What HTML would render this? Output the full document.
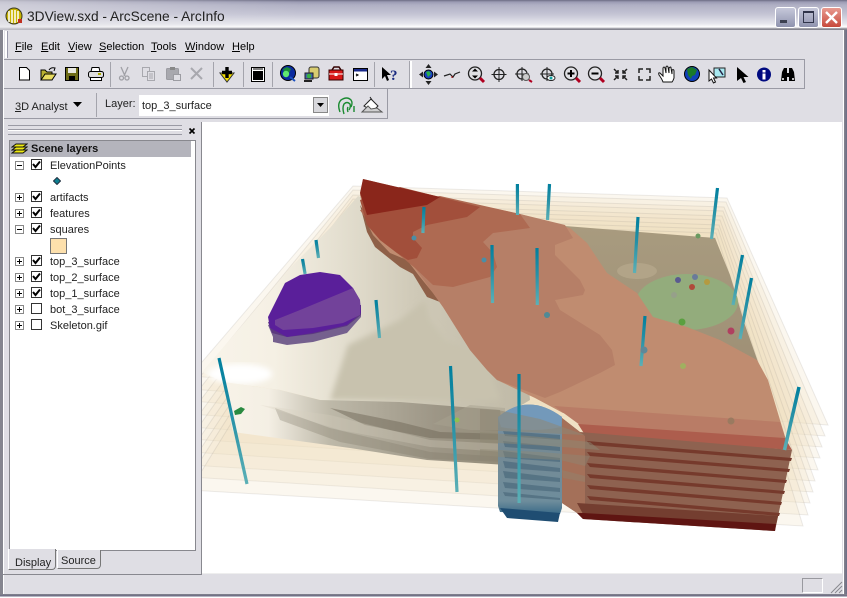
<!DOCTYPE html>
<html><head><meta charset="utf-8">
<style>
html,body{margin:0;padding:0;background:#dfdee4;}
body{width:847px;height:598px;position:relative;overflow:hidden;font:11px "Liberation Sans",sans-serif;color:#000;}
.a{position:absolute;}
.t{position:absolute;white-space:nowrap;line-height:14px;}
u{text-decoration:underline;}
.chk{position:absolute;left:31px;width:9px;height:9px;border:1px solid #333;background:#fff;}
.exp{position:absolute;left:15px;width:7px;height:7px;border:1px solid #888;background:#fff;}
</style></head><body>
<!-- title bar -->
<div class="a" style="left:0;top:0;width:847px;height:30px;background:linear-gradient(#6c6c84 0,#9c9cb4 2px,#b0b0c4 5px,#c4c4d4 14px,#e8e8ee 24px,#fff 27px,#85858f 29px,#85858f 30px);"></div>
<div class="a" style="left:0;top:0;width:300px;height:30px;background:linear-gradient(90deg,rgba(223,222,228,.65),rgba(223,222,228,0));"></div>
<svg class="a" style="left:5px;top:7px" width="18" height="18" viewBox="0 0 18 18"><circle cx="9" cy="9" r="8" fill="#c8b400" stroke="#3a3a20"/><path d="M4 4v11M7 3v13M10 3v13M13 4v11" stroke="#fff" stroke-width="1.5"/><rect x="13" y="12" width="4" height="4" fill="#c03020"/></svg>
<div class="t" style="left:27px;top:10px;font-size:13.75px;color:#222;">3DView.sxd - ArcScene - ArcInfo</div>
<!-- window buttons -->
<div class="a" style="left:775px;top:7px;width:19px;height:19px;border-radius:3px;border:1px solid #fff;background:linear-gradient(#c6c8da,#8f93ae);box-sizing:content-box"><div class="a" style="left:4px;top:12px;width:7px;height:3px;background:#3c4050;"></div></div>
<div class="a" style="left:798px;top:7px;width:19px;height:19px;border-radius:3px;border:1px solid #fff;background:linear-gradient(#c6c8da,#8f93ae);"><div class="a" style="left:4px;top:3px;width:9px;height:9px;border:1px solid #30344a;border-top-width:2px;"></div></div>
<div class="a" style="left:821px;top:7px;width:19px;height:19px;border-radius:3px;border:1px solid #fff;background:linear-gradient(#e89a90,#c74a3c);"><svg class="a" style="left:2px;top:2px" width="15" height="15"><path d="M2 2L13 13M13 2L2 13" stroke="#fff" stroke-width="2.4"/></svg></div>
<!-- frame -->
<div class="a" style="left:0;top:30px;width:3px;height:568px;background:#85858f;border-right:1px solid #fff;box-sizing:content-box"></div>
<div class="a" style="left:843px;top:30px;width:4px;height:568px;background:linear-gradient(90deg,#fff 1px,#85858f 1px,#6c6c84);"></div>
<div class="a" style="left:0;top:594px;width:847px;height:4px;background:linear-gradient(#85858f,#6c6c84 2px,#fff 3px);"></div>
<!-- menu -->
<div class="a" style="left:5px;top:31px;width:2px;height:27px;background:#fff;border-right:1px solid #99a;"></div>
<div class="t" style="left:15px;top:40px;"><u>F</u>ile</div>
<div class="t" style="left:41px;top:40px;"><u>E</u>dit</div>
<div class="t" style="left:68px;top:40px;"><u>V</u>iew</div>
<div class="t" style="left:99px;top:40px;"><u>S</u>election</div>
<div class="t" style="left:151px;top:40px;"><u>T</u>ools</div>
<div class="t" style="left:185px;top:40px;"><u>W</u>indow</div>
<div class="t" style="left:232px;top:40px;"><u>H</u>elp</div>
<!-- toolbar lines -->
<div class="a" style="left:4px;top:59px;width:801px;height:30px;border:1px solid #9a9aa4;border-left:0;box-sizing:border-box;"></div>
<div class="a" style="left:4px;top:89px;width:384px;height:30px;border-right:1px solid #9a9aa4;border-bottom:1px solid #9a9aa4;box-sizing:border-box;"></div>
<div class="a" style="left:409px;top:61px;width:1px;height:27px;background:#a4a4ac;border-right:2px solid #fff;"></div>
<div class="a" style="left:110px;top:62px;width:1px;height:25px;background:#a4a4ac;"></div>
<div class="a" style="left:213px;top:62px;width:1px;height:25px;background:#a4a4ac;"></div>
<div class="a" style="left:243px;top:62px;width:1px;height:25px;background:#a4a4ac;"></div>
<div class="a" style="left:272px;top:62px;width:1px;height:25px;background:#a4a4ac;"></div>
<div class="a" style="left:374px;top:62px;width:1px;height:25px;background:#a4a4ac;"></div>
<div class="a" style="left:96px;top:93px;width:1px;height:24px;background:#a4a4ac;"></div>
<!-- toolbar icons -->
<svg class="a" style="left:0;top:55px" width="847" height="40" viewBox="0 55 847 40">
<path d="M19.500 67.500h7l3 3v9.500h-10z" fill="#fff" stroke="#000"/>
<path d="M41 80V70h4l2 2h5v8z" fill="#b8b030" stroke="#000"/><path d="M41 80l4-6h11l-4 6z" fill="#e8dc60" stroke="#000"/><path d="M49 70q2-3 6-2l-1 3" fill="none" stroke="#000"/>
<rect x="65.500" y="67.500" width="13" height="13" fill="#6e6c16" stroke="#000"/><rect x="68" y="68" width="8" height="5" fill="#e8e8e0"/><rect x="69" y="76" width="6" height="4" fill="#000"/>
<path d="M92 67.500h7l1 4H91z" fill="#fff" stroke="#000"/><rect x="88.500" y="71.500" width="15" height="6" rx="2" fill="#ddd" stroke="#000"/><rect x="90.500" y="77.500" width="11" height="3" fill="#fff" stroke="#000"/><rect x="98" y="73" width="3" height="2" fill="#aa0"/>
<g stroke="#a0a0a6" fill="none" stroke-width="1.300"><path d="M121 67l4 9M128 67l-4 9"/><circle cx="121.500" cy="78" r="2"/><circle cx="127" cy="78" r="2"/></g>
<g stroke="#a8a8ae" fill="#dfdee4"><rect x="142.500" y="67.500" width="7" height="9"/><rect x="147.500" y="71.500" width="7" height="9"/><path d="M149 74h4M149 76h4M149 78h4"/></g>
<rect x="166.500" y="68.500" width="12" height="11" rx="1" fill="#a8a8ae" stroke="#9c9ca2"/><rect x="170" y="67" width="5" height="3" fill="#888"/><rect x="173.500" y="74.500" width="7" height="6" fill="#dfdee4" stroke="#9c9ca2"/>
<path d="M191 68l11 11M202 68l-11 11" stroke="#a8a8ae" stroke-width="2"/>
<path d="M220 73h14l-7 9z" fill="#f5e000" stroke="#333"/><path d="M227 67v11M222 72.500h10" stroke="#000" stroke-width="3.400"/>
<rect x="251.500" y="67.500" width="13" height="14" fill="#fff" stroke="#000"/><rect x="253" y="71" width="10" height="9" fill="#000"/><path d="M253 69h10" stroke="#000"/>
<circle cx="288" cy="73" r="7.500" fill="#0a2aa0" stroke="#000"/><path d="M283 69l4-2 4 2-2 4-4 3z" fill="#1a8a3a"/><circle cx="286" cy="74" r="3.200" fill="#60e870"/><path d="M290 77l5 4" stroke="#1a50c0" stroke-width="2"/>
<rect x="309" y="67" width="10" height="11" rx="2" fill="#d8cc70" stroke="#333"/><rect x="305" y="73" width="8" height="6" fill="#4060b0" stroke="#222"/><circle cx="309" cy="76" r="2.300" fill="#38b040"/><path d="M304 81h8" stroke="#222" stroke-width="2"/>
<path d="M329 70h14v10h-14z" fill="#d81818" stroke="#300"/><path d="M332 70l2-3h5l2 3" fill="none" stroke="#300" stroke-width="1.500"/><path d="M329 74h14" stroke="#fff"/><rect x="334.500" y="73" width="3" height="3" fill="#fff"/>
<rect x="353.500" y="68.500" width="14" height="12" fill="#fff" stroke="#000"/><rect x="354" y="69" width="13" height="2.500" fill="#1a2a8a"/><path d="M356 74l2 1-2 1" stroke="#000" fill="none"/>
<path d="M382 67v12l3-3 2 5 2-1-2-5h4z" fill="#000"/>
<text x="390" y="80" font-family="Liberation Serif,serif" font-weight="bold" font-size="15" fill="#1a2a80">?</text>
<circle cx="428.500" cy="74.500" r="4.500" fill="#1840c0" stroke="#000"/><path d="M426 72l3-1 2 3-3 3z" fill="#28b048"/><path d="M428.500 64l-3 4h6zM428.500 85l-3-4h6zM419 74.500l4-3v6zM438 74.500l-4-3v6z" fill="#222"/>
<path d="M444 76l6-2 3 3 2-3 5-2" fill="none" stroke="#222" stroke-width="1.200"/><path d="M452 76v2" stroke="#a00"/>
<circle cx="475" cy="73.500" r="6.500" fill="#e0e0e4" stroke="#222" stroke-width="1.300"/><path d="M475 68.500l-3 3h6zM475 78.500l-3-3h6z" fill="#000"/><path d="M480 78l4 4" stroke="#b00020" stroke-width="3"/>
<circle cx="499" cy="74.500" r="5" fill="none" stroke="#222" stroke-width="1.300"/><path d="M499 67v15M491.500 74.500h15" stroke="#222"/>
<circle cx="522" cy="74" r="5" fill="none" stroke="#222" stroke-width="1.300"/><path d="M522 67v14M515 74h14" stroke="#222"/><circle cx="526" cy="77" r="3.500" fill="#ccc" stroke="#555"/><path d="M529 80l3 2" stroke="#b00020" stroke-width="2"/>
<circle cx="547" cy="74" r="5" fill="none" stroke="#222" stroke-width="1.300"/><path d="M547 67v14M540 74h14" stroke="#222"/><ellipse cx="551" cy="78" rx="4" ry="2.500" fill="#fff" stroke="#222"/><circle cx="551" cy="78" r="1.500" fill="#10a0a0"/>
<circle cx="571" cy="73.500" r="6.500" fill="#e0e0e4" stroke="#222" stroke-width="1.300"/><path d="M571 70v7M567.500 73.500h7" stroke="#000" stroke-width="2"/><path d="M576 78l4 4" stroke="#b00020" stroke-width="3"/>
<circle cx="595" cy="73.500" r="6.500" fill="#e0e0e4" stroke="#222" stroke-width="1.300"/><path d="M591.500 73.500h7" stroke="#000" stroke-width="2"/><path d="M600 78l4 4" stroke="#b00020" stroke-width="3"/>
<path d="M614 69l4 4M618 70v3h-3M627 69l-4 4M623 70v3h3M614 80l4-4M618 79v-3h-3M627 80l-4-4M623 79v-3h3" fill="none" stroke="#222" stroke-width="1.500"/>
<path d="M639 73v-4h4M650 73v-4h-4M639 76v4h4M650 76v4h-4" fill="none" stroke="#222" stroke-width="1.500"/>
<path d="M663 82q-1-3-4-7-1-3 1-2l3 3v-8q1-2 2 0l1 5v-6q1-2 2 0l1 6v-5q2-2 2 0l1 6v-4q2-1 2 1v7q-1 3-2 4z" fill="#fff" stroke="#111"/>
<circle cx="692" cy="74" r="7.500" fill="#1040b8" stroke="#000"/><path d="M687 69l5-2 5 3-2 5-3 1-1 3-3-4z" fill="#1a7a2a"/>
<path d="M714 68h11v9h-11z" fill="#a8e8f0" stroke="#222"/><path d="M719 69l4 6" stroke="#224" stroke-width="1.500"/><path d="M709 70v11l2.500-2 2 4 2-1-2-4h3z" fill="#fff" stroke="#111"/>
<path d="M737 67v14l4-3 2.500 5 2.500-1-2.500-5h5z" fill="#000"/>
<circle cx="764" cy="74.500" r="7" fill="#000a80"/><rect x="762.500" y="70" width="3" height="2.500" fill="#fff"/><rect x="762.500" y="73.500" width="3" height="6" fill="#fff"/>
<path d="M781 81l1-9 2-4h3v13zM789 81V68h3l2 4 1 9z" fill="#000"/><rect x="785" y="73" width="6" height="4" fill="#000"/><circle cx="783" cy="79" r="1" fill="#fff"/><circle cx="793" cy="79" r="1" fill="#fff"/>
</svg>
<!-- row 3 -->
<div class="t" style="left:15px;top:100px;color:#222"><u>3</u>D Analyst</div>
<svg class="a" style="left:73px;top:102px" width="10" height="6"><path d="M0 0h9L4.500 5z" fill="#000"/></svg>
<div class="t" style="left:105px;top:97px;color:#222">Layer:</div>
<div class="a" style="left:139px;top:95px;width:190px;height:21px;background:#fff;"></div>
<div class="t" style="left:142px;top:99px;color:#222">top_3_surface</div>
<div class="a" style="left:313px;top:97px;width:15px;height:16px;background:#d8d8dc;border:1px solid #888;box-sizing:border-box;"><svg class="a" style="left:3px;top:5px" width="9" height="5"><path d="M0 0h7L3.500 4z" fill="#000"/></svg></div>
<svg class="a" style="left:336px;top:95px" width="50" height="22" viewBox="336 95 50 22">
<path d="M340 112q-3-8 1-12 6-4 10 0 2 3 0 7M344 114q-2-6 0-10 3-3 6 0 1 3-1 6M348 112q-1-3 0-5M354 106v6" fill="none" stroke="#1a8a30" stroke-width="1.400"/>
<path d="M364 106l7-7 7 7-5 5z" fill="#fff" stroke="#222"/><path d="M362 112l6-6 3 3 6-1 5 4z" fill="#cfcfd0" stroke="#555"/><path d="M370 97l2 3" stroke="#222"/>
</svg>
<!-- TOC panel -->
<div class="a" style="left:8px;top:125px;width:174px;height:3px;border-top:1px solid #9a9aa4;border-bottom:1px solid #9a9aa4;"></div>
<div class="a" style="left:8px;top:130px;width:174px;height:3px;border-top:1px solid #fff;border-bottom:1px solid #9a9aa4;"></div>
<svg class="a" style="left:187px;top:126px" width="11" height="10"><path d="M2.500 2.500l5 5M7.500 2.500l-5 5" stroke="#000" stroke-width="1.600"/></svg>
<div class="a" style="left:201px;top:122px;width:1px;height:453px;background:#88888f;"></div>
<div class="a" style="left:9px;top:140px;width:187px;height:411px;background:#fff;border:1px solid #88888e;box-sizing:border-box;"></div>
<div class="a" style="left:10px;top:141px;width:181px;height:16px;background:#b4b4bc;"></div>
<svg class="a" style="left:11px;top:141px" width="17" height="16"><path d="M1 12l4-3h11l-4 3zM1 9l4-3h11l-4 3zM1 6l4-3h11l-4 3z" fill="#f0ec10" stroke="#111"/></svg>
<div class="t" style="left:31px;top:142px;font-weight:bold;color:#111;">Scene layers</div>
<div class="exp" style="top:161px;"><div class="a" style="left:1px;top:3px;width:5px;height:1px;background:#000"></div></div>
<div class="chk" style="top:159px;"><svg class="a" style="left:0;top:0" width="9" height="9"><path d="M1 4l2.500 3L8 1.500" fill="none" stroke="#000" stroke-width="2"/></svg></div>
<div class="t" style="left:50px;top:159px;color:#222">ElevationPoints</div>
<svg class="a" style="left:53px;top:177px" width="8" height="8"><path d="M4 .5L7.500 4 4 7.500.5 4z" fill="#0d7f90" stroke="#234"/></svg>
<div class="exp" style="top:193px;"><div class="a" style="left:1px;top:3px;width:5px;height:1px;background:#000"></div><div class="a" style="left:3px;top:1px;width:1px;height:5px;background:#000"></div></div>
<div class="chk" style="top:191px;"><svg class="a" style="left:0;top:0" width="9" height="9"><path d="M1 4l2.500 3L8 1.500" fill="none" stroke="#000" stroke-width="2"/></svg></div>
<div class="t" style="left:50px;top:191px;color:#222">artifacts</div>
<div class="exp" style="top:209px;"><div class="a" style="left:1px;top:3px;width:5px;height:1px;background:#000"></div><div class="a" style="left:3px;top:1px;width:1px;height:5px;background:#000"></div></div>
<div class="chk" style="top:207px;"><svg class="a" style="left:0;top:0" width="9" height="9"><path d="M1 4l2.500 3L8 1.500" fill="none" stroke="#000" stroke-width="2"/></svg></div>
<div class="t" style="left:50px;top:207px;color:#222">features</div>
<div class="exp" style="top:225px;"><div class="a" style="left:1px;top:3px;width:5px;height:1px;background:#000"></div></div>
<div class="chk" style="top:223px;"><svg class="a" style="left:0;top:0" width="9" height="9"><path d="M1 4l2.500 3L8 1.500" fill="none" stroke="#000" stroke-width="2"/></svg></div>
<div class="t" style="left:50px;top:223px;color:#222">squares</div>
<div class="a" style="left:50px;top:238px;width:15px;height:14px;background:#fde0ac;border:1px solid #777;"></div>
<div class="exp" style="top:257px;"><div class="a" style="left:1px;top:3px;width:5px;height:1px;background:#000"></div><div class="a" style="left:3px;top:1px;width:1px;height:5px;background:#000"></div></div>
<div class="chk" style="top:255px;"><svg class="a" style="left:0;top:0" width="9" height="9"><path d="M1 4l2.500 3L8 1.500" fill="none" stroke="#000" stroke-width="2"/></svg></div>
<div class="t" style="left:50px;top:255px;color:#222">top_3_surface</div>
<div class="exp" style="top:273px;"><div class="a" style="left:1px;top:3px;width:5px;height:1px;background:#000"></div><div class="a" style="left:3px;top:1px;width:1px;height:5px;background:#000"></div></div>
<div class="chk" style="top:271px;"><svg class="a" style="left:0;top:0" width="9" height="9"><path d="M1 4l2.500 3L8 1.500" fill="none" stroke="#000" stroke-width="2"/></svg></div>
<div class="t" style="left:50px;top:271px;color:#222">top_2_surface</div>
<div class="exp" style="top:289px;"><div class="a" style="left:1px;top:3px;width:5px;height:1px;background:#000"></div><div class="a" style="left:3px;top:1px;width:1px;height:5px;background:#000"></div></div>
<div class="chk" style="top:287px;"><svg class="a" style="left:0;top:0" width="9" height="9"><path d="M1 4l2.500 3L8 1.500" fill="none" stroke="#000" stroke-width="2"/></svg></div>
<div class="t" style="left:50px;top:287px;color:#222">top_1_surface</div>
<div class="exp" style="top:305px;"><div class="a" style="left:1px;top:3px;width:5px;height:1px;background:#000"></div><div class="a" style="left:3px;top:1px;width:1px;height:5px;background:#000"></div></div>
<div class="chk" style="top:303px;"></div>
<div class="t" style="left:50px;top:303px;color:#222">bot_3_surface</div>
<div class="exp" style="top:321px;"><div class="a" style="left:1px;top:3px;width:5px;height:1px;background:#000"></div><div class="a" style="left:3px;top:1px;width:1px;height:5px;background:#000"></div></div>
<div class="chk" style="top:319px;"></div>
<div class="t" style="left:50px;top:319px;color:#222">Skeleton.gif</div>
<!-- tabs -->
<div class="a" style="left:8px;top:549px;width:48px;height:21px;background:#dfdee4;border-left:1px solid #fff;border-bottom:1px solid #777;border-right:1px solid #777;box-sizing:border-box;border-radius:0 0 4px 0;"></div>
<div class="t" style="left:15px;top:556px;color:#222">Display</div>
<div class="a" style="left:57px;top:550px;width:44px;height:19px;background:#dfdee4;border:1px solid #777;border-top:0;border-left-color:#fff;box-sizing:border-box;border-radius:0 0 4px 0;"></div>
<div class="t" style="left:61px;top:554px;color:#222">Source</div>
<div class="a" style="left:3px;top:574px;width:198px;height:1px;background:#88888f;"></div>
<!-- status -->
<div class="a" style="left:802px;top:578px;width:21px;height:15px;border:1px solid;border-color:#99999f #fff #fff #99999f;box-sizing:border-box;"></div>
<svg class="a" style="left:830px;top:580px" width="13" height="14"><path d="M12 2L1 13M12 6L5 13M12 10L9 13" stroke="#88888f"/></svg>
<!-- scene -->
<svg class="a" style="left:202px;top:122px" width="640" height="452" viewBox="202 122 640 452">
<defs>
<linearGradient id="g1" x1="0" x2="1" y1="0" y2="0"><stop offset="0" stop-color="#f8f4ea"/><stop offset=".22" stop-color="#f5f0e4"/><stop offset=".42" stop-color="#e4dfd0"/><stop offset=".65" stop-color="#cfc9b7"/><stop offset="1" stop-color="#bfb9a6"/></linearGradient>
<linearGradient id="g2" x1="0" x2="1" y1="0" y2="0"><stop offset="0" stop-color="#f8f3e8"/><stop offset=".16" stop-color="#f4efe4"/><stop offset=".38" stop-color="#bdb8a8"/><stop offset=".75" stop-color="#9d9686"/><stop offset="1" stop-color="#928b78"/></linearGradient>
<linearGradient id="ol" x1="0" x2="0" y1="0" y2="1"><stop offset="0" stop-color="#a89b7f"/><stop offset="1" stop-color="#9f9076"/></linearGradient>
<linearGradient id="p" x1="0" x2="0" y1="0" y2="1"><stop offset="0" stop-color="#007f9e"/><stop offset=".45" stop-color="#2590a6"/><stop offset="1" stop-color="#5cb0b6"/></linearGradient>
<linearGradient id="cy" x1="0" x2="0" y1="0" y2="1"><stop offset="0" stop-color="#7496b2"/><stop offset=".4" stop-color="#758a94"/><stop offset=".88" stop-color="#6e8d9c"/><stop offset="1" stop-color="#3a6a88"/></linearGradient>
<filter id="b1" x="-10%" y="-10%" width="120%" height="120%"><feGaussianBlur stdDeviation="3"/></filter>
</defs>
<rect x="202" y="122" width="640" height="452" fill="#fff"/>
<!-- stacked planes -->
<g fill="#eee0c0" fill-opacity=".25" stroke="#8e8a80" stroke-opacity=".16" stroke-width="1">
<polygon points="353,186 727,198 828,425 190,376"/>
<polygon points="353,190 726,202 825,436 190,389"/>
<polygon points="353,195 724,207 822,447 190,401"/>
<polygon points="353,199 723,211 820,458 190,414"/>
<polygon points="353,204 722,216 818,470 190,427"/>
<polygon points="353,208 720,220 815,481 190,439"/>
<polygon points="353,212 719,225 813,492 190,452"/>
<polygon points="353,217 718,229 810,503 190,465"/>
<polygon points="353,221 716,233 808,515 190,477"/>
<polygon points="353,226 715,238 803,526 190,490"/>
</g>
<!-- ground -->
<polygon points="358,196 330,228 290,268 245,322 202,372 223,382 280,390 320,400 400,405 505,415 530,400 520,300 500,250 420,220" fill="url(#g1)"/>
<path d="M330 400l18-55 52-25 25-20 5 20 15 20 25 10 20 20 10 30z" fill="#c8c2ae" filter="url(#b1)"/>
<ellipse cx="240" cy="374" rx="32" ry="10" fill="#fff" filter="url(#b1)"/>
<!-- front layered ground slabs -->
<polygon points="223,382 280,390 320,400 400,402 500,410 507,465 427,460 350,448 233,432" fill="url(#g2)"/>
<polygon points="330,408 400,422 440,432 505,434 505,440 430,438 365,425" fill="#6f6858" fill-opacity=".5"/>
<polygon points="275,408 330,428 430,452 505,457 505,462 430,459 340,442 280,420" fill="#7d7666" fill-opacity=".3"/>
<polygon points="260,405 330,415 430,440 505,444 505,452 430,447 340,430" fill="#d6d0c0" fill-opacity=".3"/>
<polygon points="433,424 470,405 505,408 505,430 470,430" fill="#a8a18f" opacity=".5"/>
<!-- olive -->
<polygon points="565,226 715,238 730,275 745,325 758,362 700,345 640,318 610,280" fill="url(#ol)"/>
<ellipse cx="637" cy="271" rx="20" ry="8" fill="#b2a488"/>
<ellipse cx="687" cy="302" rx="51" ry="28" fill="#93ac7c"/>
<!-- salmon under edge -->
<polygon points="360,205 367,232 375,247 400,267 413,274 427,297 440,302 432,280 410,260 380,235" fill="#8f6048"/>
<!-- salmon main -->
<polygon points="363,179 440,197 520,214 570,228 587,243 607,273 637,293 653,317 687,327 720,340 757,360 768,380 786,440 563,413 535,398 497,380 487,370 470,350 443,307 433,293 420,277 407,260 390,253 373,235 367,223 360,195" fill="#c08c70"/>
<polygon points="520,214 565,225 573,238 555,245 555,255 580,280 585,290 583,295 555,300 560,310 600,335 612,350 615,365 600,373 560,392 545,398 497,380 487,370 470,350 443,307 433,293 415,268" fill="#b67f67"/>
<polygon points="440,196 520,214 530,228 493,233 483,242 493,253 497,267 490,277 453,287 433,285 415,268 397,253 380,240 360,210" fill="#ae6a52"/>
<polygon points="400,187 480,207 467,217 427,225 413,232 413,238 422,248 417,258 408,260 397,253 380,240 367,225 360,200" fill="#a24f3b"/>
<polygon points="363,179 440,197 427,205 367,215 360,193" fill="#8a261b"/>
<!-- salmon slab -->
<polygon points="554,406 780,422 786,440 580,425" fill="#b97c66"/>
<polygon points="578,424 785,438 792,450 585,435" fill="#ad5d4d"/>
<polygon points="562,418 580,432 792,450 775,531 583,519 577,513 562,503" fill="#8e6250"/>
<polygon points="562,418 585,436 585,518 562,503" fill="#a47059"/>
<g fill="#763a2c">
<polygon points="587,441 792,458 791,461 590,445"/>
<polygon points="587,452 790,469 789,472 590,456"/>
<polygon points="587,463 787,480 786,483 590,467"/>
<polygon points="587,474 785,491 784,494 590,478"/>
<polygon points="587,485 782,502 781,505 590,489"/>
<polygon points="587,496 780,513 779,516 590,500"/>
</g>
<polygon points="577,503 778,516 776,525 583,514" fill="#743e30"/>
<polygon points="577,513 583,519 775,531 776,524 583,513" fill="#5f1512"/>
<!-- cylinder -->
<path d="M498 417q30-25 64 0l0 91-2 6-60-2-2-6z" fill="url(#cy)"/>
<path d="M498 417q30-25 64 0l-1 10q-28 6-60 0z" fill="#7399ba"/>
<g fill="#4b6a7c" fill-opacity=".7"><polygon points="503,431 560,435 560,440 505,436"/><polygon points="503,441 560,447 560,451 505,447"/><polygon points="503,451 560,458 560,462 505,458"/><polygon points="503,461 560,468 560,472 505,468"/><polygon points="503,471 560,478 560,482 505,478"/><polygon points="503,482 560,488 560,492 505,488"/><polygon points="503,492 560,498 560,500 505,496"/></g>
<path d="M500 508l7 10 51 4 2-9z" fill="#1f4d72"/>
<polygon points="480,409 498,410 540,419 585,435 520,432 480,430" fill="#8e8774" opacity=".55"/>
<polygon points="480,432 540,437 590,442 600,450 550,446 480,442" fill="#8e8774" opacity=".5"/>
<polygon points="480,449 540,452 590,456 585,466 560,460 480,456" fill="#8e8774" opacity=".45"/>
<polygon points="562,470 585,476 585,482 563,478" fill="#8e8774" opacity=".4"/>
<!-- poles -->
<g fill="none" stroke="url(#p)" stroke-width="3.200">
<path d="M517.400 184l.1 31"/><path d="M549.500 184l-2 36"/><path d="M424 207l-1.100 26"/><path d="M316 240l2.500 18"/><path d="M302.500 259l2.600 15"/>
<path d="M638 217l-3.500 56"/><path d="M717.500 188l-6 51"/><path d="M742.500 255l-9.500 50"/><path d="M751.500 278l-11.500 61"/>
<path d="M537 248l.3 57"/><path d="M492 245l.5 58"/><path d="M645 316l-4 50"/><path d="M376 300l3.500 38"/>
<path d="M219 358l28 126"/><path d="M450.500 366l6.500 126"/><path d="M519 374l.1 129"/>
</g>
<path d="M799 387l-14.500 63" stroke="url(#p)" stroke-width="3.500" fill="none"/>
<!-- dots -->
<g>
<circle cx="414" cy="238" r="2.500" fill="#4a8ea6"/><circle cx="484" cy="260" r="2.500" fill="#4a8ea6"/><circle cx="547" cy="315" r="3" fill="#4f8a96"/>
<circle cx="678" cy="280" r="3" fill="#5a5a90"/><circle cx="695" cy="277" r="3" fill="#6a7a9a"/><circle cx="707" cy="282" r="3" fill="#b49a40"/><circle cx="692" cy="287" r="3" fill="#b04a3a"/><circle cx="674" cy="295" r="3" fill="#96a08a"/><circle cx="682" cy="322" r="3.500" fill="#5aa040"/><circle cx="731" cy="331" r="3.500" fill="#b04060"/><circle cx="644" cy="350" r="3.500" fill="#5f8898"/><circle cx="683" cy="366" r="3" fill="#a0b060"/><circle cx="731" cy="421" r="3.500" fill="#9a7a60"/><circle cx="698" cy="236" r="2.500" fill="#6a9a60"/>
<path d="M234 411l7-4 4 2-4 5-6 1z" fill="#2a8a40"/><circle cx="457" cy="420" r="2.500" fill="#90c050"/>
</g>
<!-- purple blob -->
<polygon points="268,325 273,337 273,342 287,345 313,342 347,333 361,317 361,305" fill="#75608e"/>
<polygon points="268,322 272,333 287,337 313,334 347,326 361,315 361,305" fill="#5c3a80"/>
<polygon points="268,317 285,283 300,275 320,272 340,275 353,288 360,300 361,313 347,325 313,333 287,337 270,328" fill="#5a1f9a"/>
<polygon points="275,320 300,310 353,288 360,300 360,315 343,323 313,328 283,330 275,325" fill="#72429a"/>
<!-- edge -->
<rect x="202" y="573" width="640" height="1" fill="#eee"/>
</svg>
</body></html>
